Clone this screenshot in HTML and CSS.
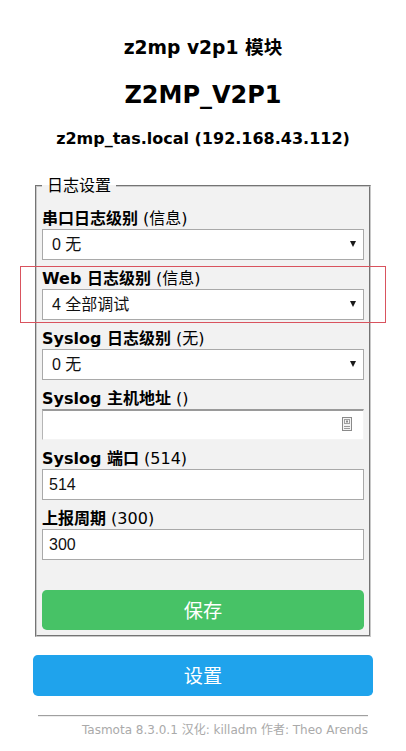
FILE: index.html
```
<!DOCTYPE html>
<html lang="zh">
<head>
<meta charset="utf-8">
<title>z2mp v2p1 - 日志设置</title>
<link rel="stylesheet" href="styles.css">
</head>
<body>
<div class="wrap">
  <div class="head">
    <h3>z2mp v2p1 模块</h3>
    <h2>Z2MP_V2P1</h2>
    <h4>z2mp_tas.local (192.168.43.112)</h4>
  </div>
  <fieldset class="box">
    <legend class="legend">&nbsp;日志设置&nbsp;</legend>
    <form class="form">
      <p class="row"><b>串口日志级别</b> (信息)<br>
        <span class="sel"><select class="field"><option>0 无</option></select></span></p>
      <p class="row"><b>Web 日志级别</b> (信息)<br>
        <span class="sel"><select class="field"><option>4 全部调试</option></select></span></p>
      <p class="row"><b>Syslog 日志级别</b> (无)<br>
        <span class="sel"><select class="field"><option>0 无</option></select></span></p>
      <p class="row"><b>Syslog 主机地址</b> ()<br>
        <span class="hostwrap"><input class="field host" type="text" value="">
        <svg class="autofill" width="10" height="14" viewBox="0 0 10 14"><rect x="0.5" y="0.5" width="9" height="13" fill="#f4f4f4" stroke="#8a8a8a"/><rect x="2.5" y="2.5" width="5" height="4" fill="none" stroke="#a0a0a0"/><rect x="4" y="3.5" width="2" height="2" fill="#8a8a8a"/><path d="M2 9.5h6M2 11.5h6" stroke="#9a9a9a"/></svg></span></p>
      <p class="row"><b>Syslog 端口</b> (514)<br>
        <input class="field" type="text" value="514"></p>
      <p class="row"><b>上报周期</b> (300)<br>
        <input class="field" type="text" value="300"></p>
      <div class="gap"></div>
      <button class="btn green" type="button">保存</button>
    </form>
  </fieldset>
  <div class="spacer"></div>
  <p class="row"><button class="btn" type="button">设置</button></p>
  <div class="foot">
    <hr class="rule">
    <span class="credit">Tasmota 8.3.0.1 汉化: killadm 作者: Theo Arends</span>
  </div>
</div>
<div class="mark"></div>
</body>
</html>
```
FILE: styles.css
```
body {
  margin: 8px;
  text-align: center;
  font-family: "DejaVu Sans", "Noto Sans CJK SC", sans-serif;
  background: #ffffff;
  color: #000;
  font-size: 16px;
}
.wrap {
  display: inline-block;
  text-align: left;
  min-width: 340px;
  padding: 5px;
}
.head {
  text-align: center;
  padding: 5px;
}
.head h3 { font-size: 18.7px; line-height: 22px; margin: 19px 0 22px; }
.head h2 { font-size: 24px; line-height: 28px; margin: 0 0 20px; }
.head h4 { font-size: 16px; line-height: 19px; margin: 0 0 23px; }
.box {
  background: #f2f2f2;
  padding: 5px;
  margin: 0 2px;
  border: 2px groove #c8c8c8;
}
.legend {
  font-size: 16px;
  line-height: 19px;
  padding: 0;
}
.form { margin: 0; }
.row { margin: 8px 0; line-height: 21px; }
.row b { font-weight: bold; }
.field {
  display: block;
  width: 100%;
  box-sizing: border-box;
  padding: 5px 5px 5px 6px;
  font-family: "Liberation Sans", "Noto Sans CJK SC", sans-serif;
  font-size: 16px;
  line-height: 19px;
  border: 1px solid #a9a9a9;
  background: #fff;
  color: #111;
  height: 31px;
  margin: 0;
}
.sel { display: block; position: relative; }
.sel .field {
  appearance: none;
  -webkit-appearance: none;
  border-radius: 0;
  padding-left: 9px;
}
.sel::after {
  content: "";
  position: absolute;
  right: 8px;
  top: 12px;
  border-left: 3.5px solid transparent;
  border-right: 3.5px solid transparent;
  border-top: 6px solid #1a1a1a;
}
.hostwrap { display: block; position: relative; }
.host {
  border-style: solid;
  border-width: 2px 1px 1px 1px;
  border-color: #9a9a9a #f4f4f4 #f4f4f4 #b5b5b5;
}
.autofill { position: absolute; right: 12px; top: 8px; }
.gap { height: 22px; }
.btn {
  display: block;
  border: 0;
  border-radius: 0.3rem;
  background: #1fa3ec;
  color: #fff;
  line-height: 2.4rem;
  font-size: 1.2rem;
  width: 100%;
  padding: 1px 6px;
  font-family: "Noto Sans CJK SC", sans-serif;
}
.green { background: #47c266; }
.spacer { padding: 5px; }
.foot {
  text-align: right;
  font-size: 12px;
  line-height: 14px;
  padding: 3px 5px 5px;
}
.rule {
  margin: 8px 0 6px;
  border: 0;
  border-top: 1px solid #a0a0a0;
  border-bottom: 1px solid #eee;
}
.credit { color: #aaa; font-family: "DejaVu Sans", "Noto Sans CJK SC", sans-serif; }
.mark {
  position: absolute;
  left: 20px;
  top: 266px;
  width: 364px;
  height: 55px;
  border: 1px solid #d9535e;
}
```
